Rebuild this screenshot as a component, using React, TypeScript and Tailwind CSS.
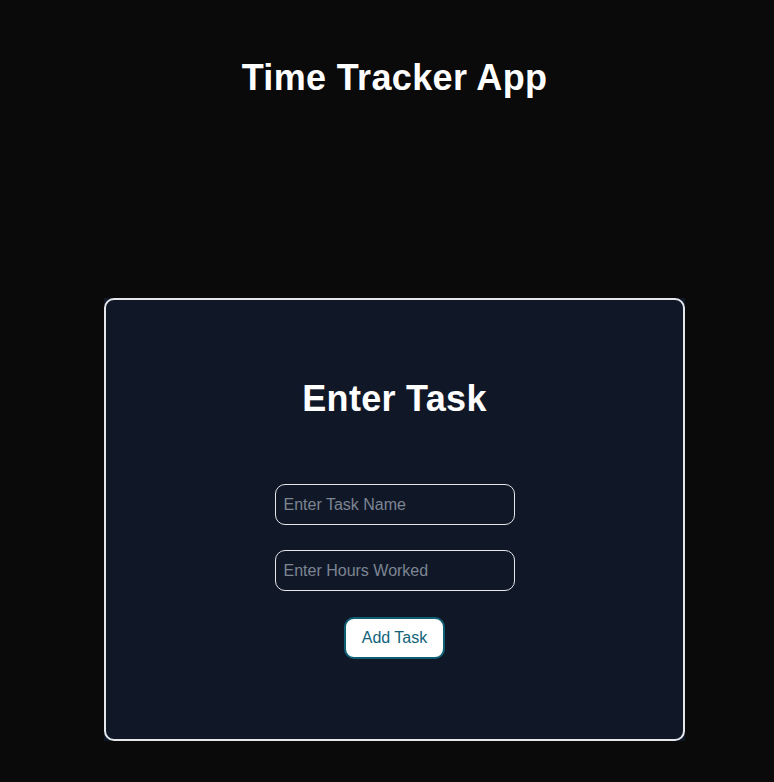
import { useState } from "react";

export default function App() {
	const [taskName, setTaskName] = useState<string>("");
	const [hours, setHours] = useState<string>("");

	const addTask = (event: React.FormEvent) => {
		event.preventDefault();
		setTaskName("");
		setHours("");
	};

	return (
		<div className="min-h-[782px] bg-[#0a0a0a] pl-[15px] font-['Liberation_Sans',Arial,sans-serif]">
			<h1 className="pt-[58px] text-center text-[36px] leading-[40px] font-bold tracking-[0.35px] text-white">Time Tracker App</h1>
			<div className="mx-auto mt-[200px] w-[581px] bg-[#101828]">
				<div className="rounded-[10px] border-2 border-[#e5e7eb] pt-[79px] pb-[80px]">
					<h2 className="text-center text-[36px] leading-[40px] font-bold tracking-[0.3px] text-white">Enter Task</h2>
					<form onSubmit={addTask} className="mt-[65px] flex flex-col items-center">
						<input
							type="text"
							value={taskName}
							onChange={(e) => setTaskName(e.target.value)}
							placeholder="Enter Task Name"
							className="h-[41px] w-[240px] rounded-[10px] border border-[#e5e7eb] bg-transparent px-2 text-base text-white placeholder:text-[#7d8592] outline-none"
						/>
						<input
							type="text"
							value={hours}
							onChange={(e) => setHours(e.target.value)}
							placeholder="Enter Hours Worked"
							className="mt-[25px] h-[41px] w-[240px] rounded-[10px] border border-[#e5e7eb] bg-transparent px-2 text-base text-white placeholder:text-[#7d8592] outline-none"
						/>
						<button
							type="submit"
							className="mt-[26px] h-[42px] w-[101px] rounded-[10px] border-2 border-[#105e73] bg-white text-base text-[#10637a] cursor-pointer">
							Add Task
						</button>
					</form>
				</div>
			</div>
		</div>
	);
}
